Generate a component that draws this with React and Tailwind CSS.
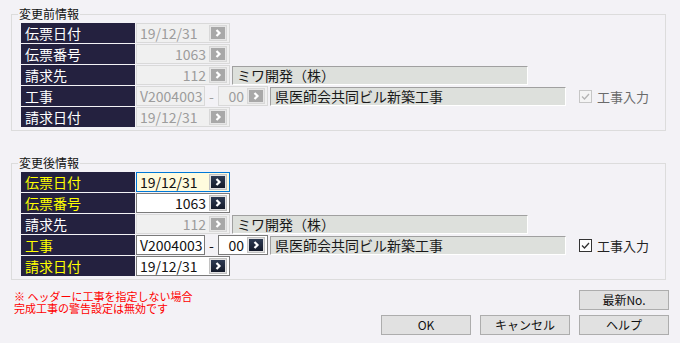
import React from "react";

const FONT = { fontFamily: '"Noto Sans CJK JP", "Noto Sans", sans-serif' };

function Chev({ disabled }) {
  return (
    <span
      className={`flex h-[16px] w-[18px] shrink-0 items-center justify-center border ${
        disabled ? "border-[#d8d8d8] bg-[#e6e6e6]" : "border-[#c2c2c2] bg-[#e1e1e1]"
      }`}
    >
      <svg width="14" height="12" viewBox="0 0 14 12">
        <defs>
          <linearGradient id="navyg" x1="0" y1="0" x2="0" y2="1">
            <stop offset="0" stopColor="#2d3a52" />
            <stop offset="1" stopColor="#141a2a" />
          </linearGradient>
        </defs>
        <rect width="14" height="12" fill={disabled ? "#a8a8a8" : "url(#navyg)"} />
        <path d="M5.5 3 L8.5 6 L5.5 9" stroke="#ffffff" strokeWidth="2.2" fill="none" />
      </svg>
    </span>
  );
}

function Label({ children, yellow }) {
  return (
    <div
      className={`flex h-full w-[114px] shrink-0 items-center bg-[#24213f] pl-[4px] text-[14px] leading-none ${
        yellow ? "text-[#ffff00]" : "text-white"
      }`}
    >
      {children}
    </div>
  );
}

function Field({ value, width = "w-[94px]", align = "left", mode = "disabled", button = true }) {
  const box =
    mode === "disabled"
      ? "border-[#d9d9d9] bg-[#f0f0f0] text-[#9c9c9c]"
      : mode === "active"
      ? "border-[#0078d7] bg-[#fffbdd] text-[#111111]"
      : "border-[#7a7a7a] bg-white text-[#111111]";
  return (
    <div className={`flex h-full ${width} shrink-0 items-center border ${box} pr-[2px]`}>
      <span
        className={`flex-1 px-[3px] text-[14px] leading-none ${
          align === "right" ? "text-right" : "text-left"
        }`}
      >
        {value}
      </span>
      {button && <Chev disabled={mode === "disabled"} />}
    </div>
  );
}

function NameBox({ children, width }) {
  return (
    <div
      className={`flex h-[19px] ${width} shrink-0 items-center border-t border-l border-t-[#a0a0a0] border-l-[#a0a0a0] border-b border-r border-b-white border-r-white bg-[#dde0dc] pl-[4px] text-[14px] leading-none text-[#1a1a1a]`}
    >
      {children}
    </div>
  );
}

function Check({ disabled }) {
  return (
    <div className="flex items-center gap-[5px]">
      <span
        className={`flex h-[13px] w-[13px] items-center justify-center border ${
          disabled ? "border-[#c6c6c6] bg-[#f4f4f4]" : "border-[#333333] bg-white"
        }`}
      >
        <svg width="11" height="11" viewBox="0 0 11 11">
          <path
            d="M2 5.5 L4.5 8 L9 3"
            stroke={disabled ? "#b4b4b4" : "#333333"}
            strokeWidth="1.3"
            fill="none"
          />
        </svg>
      </span>
      <span className={`text-[13px] leading-none ${disabled ? "text-[#6a6a6a]" : "text-[#222222]"}`}>
        工事入力
      </span>
    </div>
  );
}

function Group({ title, after }) {
  const dis = !after;
  return (
    <div className="relative ml-[11px] w-[655px] border border-[#dcdcdc] pt-[8px] pb-[3px] pl-[9px]">
      <span className="absolute left-[6px] top-[-9px] bg-[#f3f2f6] px-[1px] text-[12px] leading-[16px] text-[#111111]">
        {title}
      </span>
      <div className="flex flex-col gap-[1px]">
        <div className="flex h-[20px] items-center gap-[1px]">
          <Label yellow={after}>伝票日付</Label>
          <Field value="19/12/31" mode={after ? "active" : "disabled"} />
        </div>
        <div className="flex h-[20px] items-center gap-[1px]">
          <Label yellow={after}>伝票番号</Label>
          <Field value="1063" align="right" mode={after ? "normal" : "disabled"} />
        </div>
        <div className="flex h-[20px] items-center gap-[1px]">
          <Label>請求先</Label>
          <Field value="112" align="right" mode="disabled" />
          <div className="ml-[1px]">
            <NameBox width="w-[296px]">ミワ開発（株）</NameBox>
          </div>
        </div>
        <div className="flex h-[20px] items-center gap-[1px]">
          <Label yellow={after}>工事</Label>
          <Field value="V2004003" width="w-[69px]" button={false} mode={after ? "normal" : "disabled"} />
          <span
            className={`flex w-[11px] justify-center text-[14px] leading-none ${
              dis ? "text-[#a0a0a0]" : "text-[#111111]"
            }`}
          >
            -
          </span>
          <Field value="00" width="w-[50px]" align="right" mode={after ? "normal" : "disabled"} />
          <div className="ml-[1px]">
            <NameBox width="w-[296px]">県医師会共同ビル新築工事</NameBox>
          </div>
          <div className="ml-[12px]">
            <Check disabled={dis} />
          </div>
        </div>
        <div className="flex h-[20px] items-center gap-[1px]">
          <Label yellow={after}>請求日付</Label>
          <Field value="19/12/31" mode={after ? "normal" : "disabled"} />
        </div>
      </div>
    </div>
  );
}

function Btn({ children }) {
  return (
    <button className="flex h-[20px] w-[90px] items-center justify-center border border-[#adadad] bg-[#e1e1e1] text-[12px] leading-none text-[#111111]">
      {children}
    </button>
  );
}

export default function App() {
  return (
    <div className="h-[343px] w-[680px] overflow-hidden bg-[#f3f2f6] pt-[14px]" style={FONT}>
      <Group title="変更前情報" />
      <div className="mt-[32px]">
        <Group title="変更後情報" after />
      </div>
      <div className="mt-[10px] flex justify-between pr-[11px] pl-[14px]">
        <div className="flex flex-col gap-[1px] pt-[1px] text-[11px] leading-[11px] text-[#ff0000]">
          <div>※ ヘッダーに工事を指定しない場合</div>
          <div>完成工事の警告設定は無効です</div>
        </div>
        <div className="flex flex-col items-end gap-[5px]">
          <Btn>最新No.</Btn>
          <div className="flex gap-[9px]">
            <Btn>OK</Btn>
            <Btn>キャンセル</Btn>
            <Btn>ヘルプ</Btn>
          </div>
        </div>
      </div>
    </div>
  );
}
